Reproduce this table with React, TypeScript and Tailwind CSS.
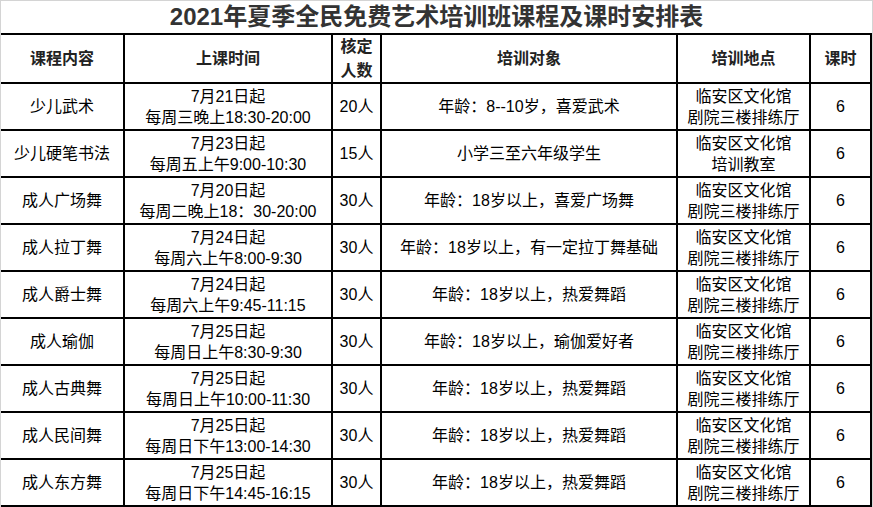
const courses = [
  { name: '少儿武术', date: '7月21日起', time: '每周三晚上18:30-20:00', count: '20人', target: '年龄：8--10岁，喜爱武术', place: ['临安区文化馆', '剧院三楼排练厅'], hours: '6' },
  { name: '少儿硬笔书法', date: '7月23日起', time: '每周五上午9:00-10:30', count: '15人', target: '小学三至六年级学生', place: ['临安区文化馆', '培训教室'], hours: '6' },
  { name: '成人广场舞', date: '7月20日起', time: '每周二晚上18：30-20:00', count: '30人', target: '年龄：18岁以上，喜爱广场舞', place: ['临安区文化馆', '剧院三楼排练厅'], hours: '6' },
  { name: '成人拉丁舞', date: '7月24日起', time: '每周六上午8:00-9:30', count: '30人', target: '年龄：18岁以上，有一定拉丁舞基础', place: ['临安区文化馆', '剧院三楼排练厅'], hours: '6' },
  { name: '成人爵士舞', date: '7月24日起', time: '每周六上午9:45-11:15', count: '30人', target: '年龄：18岁以上，热爱舞蹈', place: ['临安区文化馆', '剧院三楼排练厅'], hours: '6' },
  { name: '成人瑜伽', date: '7月25日起', time: '每周日上午8:30-9:30', count: '30人', target: '年龄：18岁以上，瑜伽爱好者', place: ['临安区文化馆', '剧院三楼排练厅'], hours: '6' },
  { name: '成人古典舞', date: '7月25日起', time: '每周日上午10:00-11:30', count: '30人', target: '年龄：18岁以上，热爱舞蹈', place: ['临安区文化馆', '剧院三楼排练厅'], hours: '6' },
  { name: '成人民间舞', date: '7月25日起', time: '每周日下午13:00-14:30', count: '30人', target: '年龄：18岁以上，热爱舞蹈', place: ['临安区文化馆', '剧院三楼排练厅'], hours: '6' },
  { name: '成人东方舞', date: '7月25日起', time: '每周日下午14:45-16:15', count: '30人', target: '年龄：18岁以上，热爱舞蹈', place: ['临安区文化馆', '剧院三楼排练厅'], hours: '6' },
]

// column widths include the 2px right border
const cell = 'flex flex-col items-center justify-center text-center border-r-2 border-black'

export default function App() {
  return (
    <div
      className="w-[873px] h-[507px] bg-white border-t border-l border-r border-[#d4d4d4] overflow-hidden text-black"
      style={{ fontFamily: '"Liberation Sans", "Noto Sans CJK SC", sans-serif' }}
    >
      {/* Title */}
      <div className="h-[34px] flex items-center justify-center border-b-2 border-black">
        <h1 className="text-[24px] leading-none font-bold text-[#333]">2021年夏季全民免费艺术培训班课程及课时安排表</h1>
      </div>

      {/* Header */}
      <div className="flex h-[49px] border-b-2 border-black text-[16px] font-bold text-[#222]">
        <div className={`${cell} w-[124px]`}>课程内容</div>
        <div className={`${cell} w-[208px]`}>上课时间</div>
        <div className={`${cell} w-[49px] leading-[24px]`}>
          <span>核定</span>
          <span>人数</span>
        </div>
        <div className={`${cell} w-[296px]`}>培训对象</div>
        <div className={`${cell} w-[133px]`}>培训地点</div>
        <div className={`${cell} w-[61px]`}>课时</div>
      </div>

      {/* Rows */}
      {courses.map((c) => (
        <div key={c.name} className="flex h-[47px] border-b-2 border-black text-[16px] leading-[21px]">
          <div className={`${cell} w-[124px]`}>{c.name}</div>
          <div className={`${cell} w-[208px]`}>
            <span>{c.date}</span>
            <span>{c.time}</span>
          </div>
          <div className={`${cell} w-[49px]`}>{c.count}</div>
          <div className={`${cell} w-[296px]`}>{c.target}</div>
          <div className={`${cell} w-[133px]`}>
            <span>{c.place[0]}</span>
            <span>{c.place[1]}</span>
          </div>
          <div className={`${cell} w-[61px]`}>{c.hours}</div>
        </div>
      ))}
    </div>
  )
}
